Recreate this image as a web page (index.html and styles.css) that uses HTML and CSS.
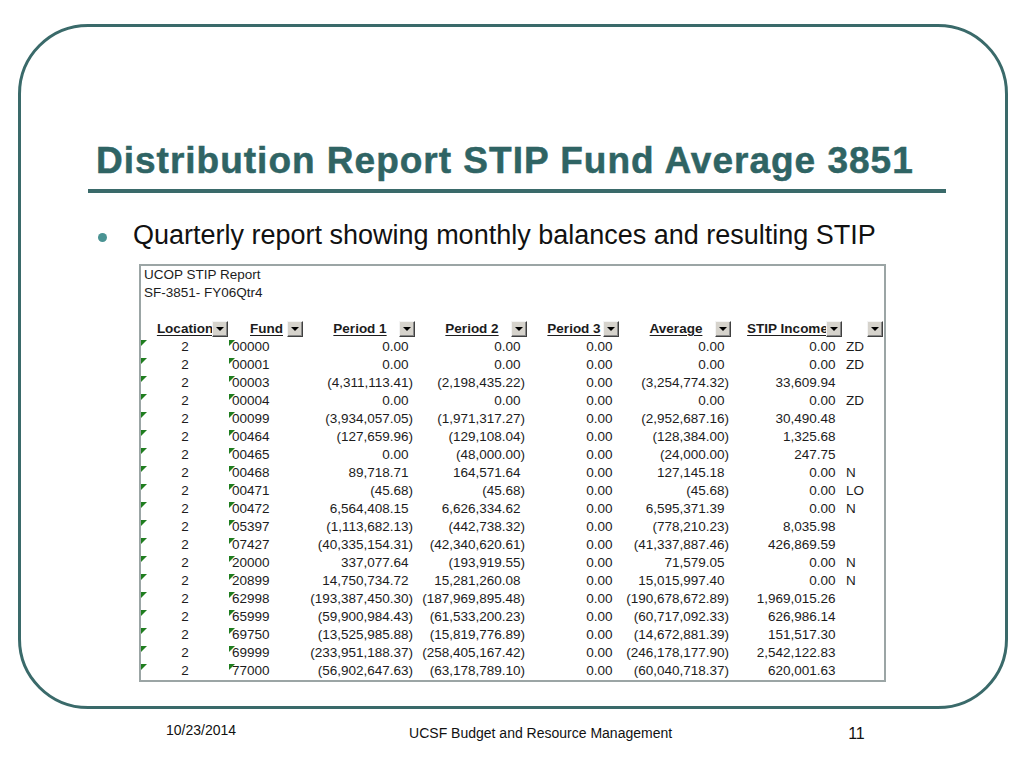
FILE: index.html
```html
<!DOCTYPE html>
<html>
<head>
<meta charset="utf-8">
<link rel="stylesheet" href="styles.css">
</head>
<body>
<div class="slide">
  <div class="frame">
    <h1 class="title">Distribution Report STIP Fund Average 3851</h1>
    <div class="bullet-row">
      <span class="dot"></span>
      <span class="bullet-text">Quarterly report showing monthly balances and resulting STIP</span>
    </div>
    <div class="sheet">
      <table class="report">
        <colgroup>
          <col class="c-loc"><col class="c-fund"><col class="c-p1"><col class="c-p2"><col class="c-p3"><col class="c-avg"><col class="c-stip"><col class="c-flag">
        </colgroup>
        <tbody>
          <tr><td colspan="8" class="caption">UCOP STIP Report</td></tr>
          <tr><td colspan="8" class="caption">SF-3851- FY06Qtr4</td></tr>
          <tr><td colspan="8"></td></tr>
          <tr class="head">
            <td><span class="hl">Location</span><span class="dd"></span></td>
            <td><span class="hl">Fund</span><span class="dd"></span></td>
            <td><span class="hl">Period 1</span><span class="dd"></span></td>
            <td><span class="hl">Period 2</span><span class="dd"></span></td>
            <td><span class="hl">Period 3</span><span class="dd"></span></td>
            <td><span class="hl">Average</span><span class="dd"></span></td>
            <td><span class="hl">STIP Income</span><span class="dd"></span></td>
            <td><span class="dd"></span></td>
          </tr>
          <tr><td class="loc"><span class="tri"></span>2</td><td class="fund"><span class="tri"></span>00000</td><td class="n p">0.00</td><td class="n p">0.00</td><td class="n p">0.00</td><td class="n p">0.00</td><td class="n p">0.00</td><td class="flag">ZD</td></tr>
          <tr><td class="loc"><span class="tri"></span>2</td><td class="fund"><span class="tri"></span>00001</td><td class="n p">0.00</td><td class="n p">0.00</td><td class="n p">0.00</td><td class="n p">0.00</td><td class="n p">0.00</td><td class="flag">ZD</td></tr>
          <tr><td class="loc"><span class="tri"></span>2</td><td class="fund"><span class="tri"></span>00003</td><td class="n">(4,311,113.41)</td><td class="n">(2,198,435.22)</td><td class="n p">0.00</td><td class="n">(3,254,774.32)</td><td class="n p">33,609.94</td><td class="flag"></td></tr>
          <tr><td class="loc"><span class="tri"></span>2</td><td class="fund"><span class="tri"></span>00004</td><td class="n p">0.00</td><td class="n p">0.00</td><td class="n p">0.00</td><td class="n p">0.00</td><td class="n p">0.00</td><td class="flag">ZD</td></tr>
          <tr><td class="loc"><span class="tri"></span>2</td><td class="fund"><span class="tri"></span>00099</td><td class="n">(3,934,057.05)</td><td class="n">(1,971,317.27)</td><td class="n p">0.00</td><td class="n">(2,952,687.16)</td><td class="n p">30,490.48</td><td class="flag"></td></tr>
          <tr><td class="loc"><span class="tri"></span>2</td><td class="fund"><span class="tri"></span>00464</td><td class="n">(127,659.96)</td><td class="n">(129,108.04)</td><td class="n p">0.00</td><td class="n">(128,384.00)</td><td class="n p">1,325.68</td><td class="flag"></td></tr>
          <tr><td class="loc"><span class="tri"></span>2</td><td class="fund"><span class="tri"></span>00465</td><td class="n p">0.00</td><td class="n">(48,000.00)</td><td class="n p">0.00</td><td class="n">(24,000.00)</td><td class="n p">247.75</td><td class="flag"></td></tr>
          <tr><td class="loc"><span class="tri"></span>2</td><td class="fund"><span class="tri"></span>00468</td><td class="n p">89,718.71</td><td class="n p">164,571.64</td><td class="n p">0.00</td><td class="n p">127,145.18</td><td class="n p">0.00</td><td class="flag">N</td></tr>
          <tr><td class="loc"><span class="tri"></span>2</td><td class="fund"><span class="tri"></span>00471</td><td class="n">(45.68)</td><td class="n">(45.68)</td><td class="n p">0.00</td><td class="n">(45.68)</td><td class="n p">0.00</td><td class="flag">LO</td></tr>
          <tr><td class="loc"><span class="tri"></span>2</td><td class="fund"><span class="tri"></span>00472</td><td class="n p">6,564,408.15</td><td class="n p">6,626,334.62</td><td class="n p">0.00</td><td class="n p">6,595,371.39</td><td class="n p">0.00</td><td class="flag">N</td></tr>
          <tr><td class="loc"><span class="tri"></span>2</td><td class="fund"><span class="tri"></span>05397</td><td class="n">(1,113,682.13)</td><td class="n">(442,738.32)</td><td class="n p">0.00</td><td class="n">(778,210.23)</td><td class="n p">8,035.98</td><td class="flag"></td></tr>
          <tr><td class="loc"><span class="tri"></span>2</td><td class="fund"><span class="tri"></span>07427</td><td class="n">(40,335,154.31)</td><td class="n">(42,340,620.61)</td><td class="n p">0.00</td><td class="n">(41,337,887.46)</td><td class="n p">426,869.59</td><td class="flag"></td></tr>
          <tr><td class="loc"><span class="tri"></span>2</td><td class="fund"><span class="tri"></span>20000</td><td class="n p">337,077.64</td><td class="n">(193,919.55)</td><td class="n p">0.00</td><td class="n p">71,579.05</td><td class="n p">0.00</td><td class="flag">N</td></tr>
          <tr><td class="loc"><span class="tri"></span>2</td><td class="fund"><span class="tri"></span>20899</td><td class="n p">14,750,734.72</td><td class="n p">15,281,260.08</td><td class="n p">0.00</td><td class="n p">15,015,997.40</td><td class="n p">0.00</td><td class="flag">N</td></tr>
          <tr><td class="loc"><span class="tri"></span>2</td><td class="fund"><span class="tri"></span>62998</td><td class="n">(193,387,450.30)</td><td class="n">(187,969,895.48)</td><td class="n p">0.00</td><td class="n">(190,678,672.89)</td><td class="n p">1,969,015.26</td><td class="flag"></td></tr>
          <tr><td class="loc"><span class="tri"></span>2</td><td class="fund"><span class="tri"></span>65999</td><td class="n">(59,900,984.43)</td><td class="n">(61,533,200.23)</td><td class="n p">0.00</td><td class="n">(60,717,092.33)</td><td class="n p">626,986.14</td><td class="flag"></td></tr>
          <tr><td class="loc"><span class="tri"></span>2</td><td class="fund"><span class="tri"></span>69750</td><td class="n">(13,525,985.88)</td><td class="n">(15,819,776.89)</td><td class="n p">0.00</td><td class="n">(14,672,881.39)</td><td class="n p">151,517.30</td><td class="flag"></td></tr>
          <tr><td class="loc"><span class="tri"></span>2</td><td class="fund"><span class="tri"></span>69999</td><td class="n">(233,951,188.37)</td><td class="n">(258,405,167.42)</td><td class="n p">0.00</td><td class="n">(246,178,177.90)</td><td class="n p">2,542,122.83</td><td class="flag"></td></tr>
          <tr><td class="loc"><span class="tri"></span>2</td><td class="fund"><span class="tri"></span>77000</td><td class="n">(56,902,647.63)</td><td class="n">(63,178,789.10)</td><td class="n p">0.00</td><td class="n">(60,040,718.37)</td><td class="n p">620,001.63</td><td class="flag"></td></tr>
        </tbody>
      </table>
    </div>
  </div>
  <div class="footer">
    <span class="date">10/23/2014</span>
    <span class="org">UCSF Budget and Resource Management</span>
    <span class="page">11</span>
  </div>
</div>
</body>
</html>
```

FILE: styles.css
```css
html, body {
  margin: 0;
  padding: 0;
  background: #ffffff;
}

.slide {
  width: 1024px;
  height: 768px;
  padding-top: 24px;
  box-sizing: border-box;
  font-family: "Liberation Sans", Arial, sans-serif;
  overflow: hidden;
}

.frame {
  box-sizing: border-box;
  width: 990px;
  height: 685px;
  margin-left: 18px;
  border: 3px solid #3a6a6a;
  border-radius: 70px;
}

.title {
  margin: 113px 0 0 67px;
  width: 858px;
  padding: 0 0 7px 8px;
  box-sizing: border-box;
  border-bottom: 4px solid #3a6a6a;
  font-size: 37px;
  line-height: 42px;
  font-weight: bold;
  letter-spacing: 1px;
  color: #2f6464;
  -webkit-text-stroke: 0.5px #2f6464;
  white-space: nowrap;
}

.bullet-row {
  display: flex;
  align-items: flex-start;
  margin: 26px 0 0 77px;
}

.dot {
  width: 9px;
  height: 9px;
  border-radius: 50%;
  background: #4a9393;
  margin-top: 14px;
  margin-right: 26px;
  flex: none;
}

.bullet-text {
  font-size: 27px;
  line-height: 32px;
  color: #111111;
  white-space: nowrap;
}

.sheet {
  box-sizing: border-box;
  width: 747px;
  margin: 13px 0 0 118px;
  border: 2px solid #9ba5a5;
}

.report {
  width: 743px;
  table-layout: fixed;
  border-collapse: collapse;
  border-spacing: 0;
  font-size: 13.5px;
  color: #1c1c1c;
}

.report tr {
  height: 18px;
}

.report td {
  height: 18px;
  padding: 0 3px;
  line-height: 16px;
  white-space: nowrap;
  overflow: visible;
  position: relative;
}

.c-loc { width: 88px; }
.c-fund { width: 75px; }
.c-p1 { width: 112px; }
.c-p2 { width: 112px; }
.c-p3 { width: 92px; }
.c-avg { width: 112px; }
.c-stip { width: 111px; }
.c-flag { width: 41px; }

.caption {
  text-align: left;
}

.head td {
  text-align: center;
  font-weight: bold;
}

.hl {
  text-decoration: underline;
  text-underline-offset: 2px;
}

.dd {
  position: absolute;
  right: 1px;
  top: 1px;
  width: 16px;
  height: 16px;
  box-sizing: border-box;
  background: #d6d3cc;
  border: 1px solid;
  border-color: #f4f4f4 #404040 #404040 #f4f4f4;
  box-shadow: inset -1px -1px 0 #8a8a8a;
}

.dd::after {
  content: "";
  position: absolute;
  left: 3px;
  top: 5px;
  width: 0;
  height: 0;
  border-left: 4px solid transparent;
  border-right: 4px solid transparent;
  border-top: 4px solid #000000;
}

.loc {
  text-align: center;
}

.fund {
  text-align: left;
}

.n {
  text-align: right;
}

.n.p {
  padding-right: 7.5px;
}

.flag {
  text-align: left;
}

.tri {
  position: absolute;
  left: 0;
  top: 2px;
  width: 0;
  height: 0;
  border-top: 6px solid #1f7d1f;
  border-right: 6px solid transparent;
}

.footer {
  display: flex;
  align-items: flex-start;
  padding-left: 166px;
  color: #111111;
}

.date {
  font-size: 14px;
  line-height: 16px;
  margin-top: 13px;
}

.org {
  font-size: 14px;
  line-height: 16px;
  margin-top: 15.5px;
  margin-left: 173px;
}

.page {
  font-size: 16px;
  line-height: 18px;
  margin-top: 15.5px;
  margin-left: 176px;
}
```
